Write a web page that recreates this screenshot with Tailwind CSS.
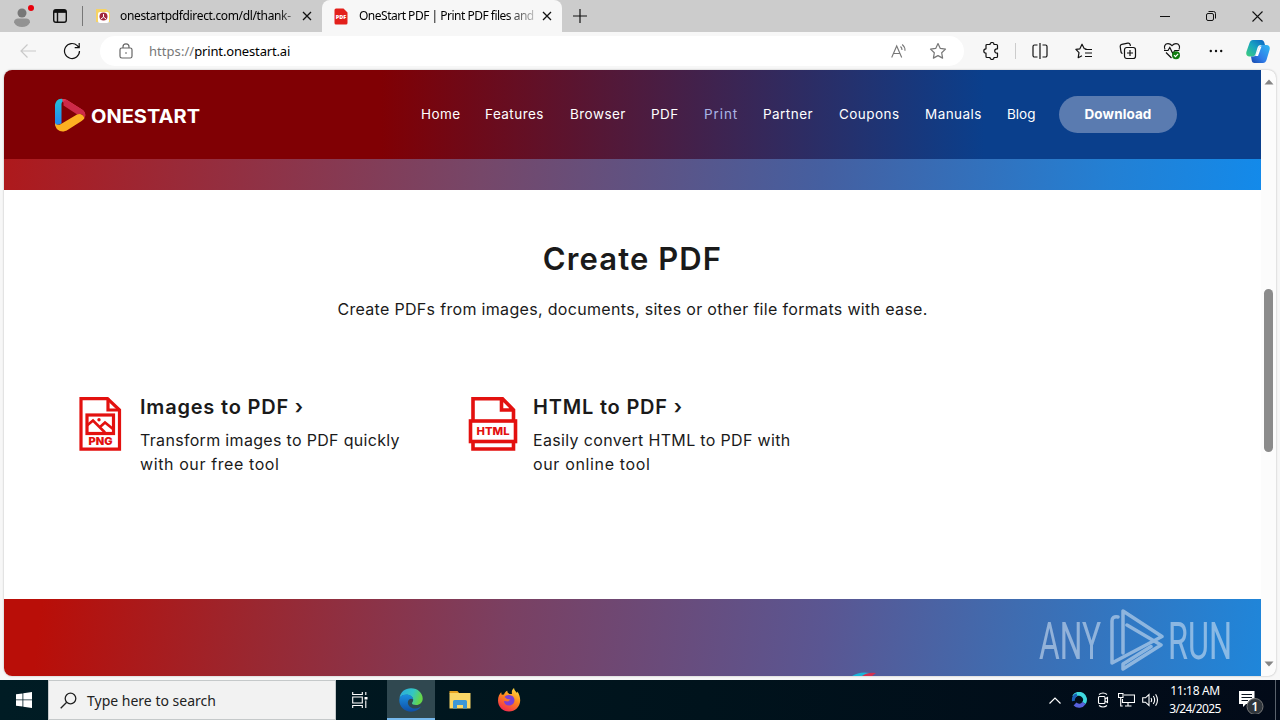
<!DOCTYPE html>
<html lang="en">
<head>
    <meta charset="UTF-8" />
    <title>OneStart PDF | Print PDF files and more</title>
    <script src="https://cdn.jsdelivr.net/npm/@tailwindcss/browser@4"></script>
</head>
<body class="w-[1280px] h-[720px] overflow-hidden bg-[#f7f7f7] font-['Noto_Sans','Open_Sans',sans-serif] text-black">
<div class="flex flex-col h-[720px]">

    <!-- tab strip -->
    <div class="flex h-8 shrink-0 items-stretch bg-[#cccccc]">
        <div class="flex w-[82px] items-center">
            <svg class="ml-3 shrink-0" width="24" height="28" viewBox="0 0 24 28">
                <circle cx="10" cy="11" r="4.500" fill="#777"/>
                <path d="M2 20.500c0-3 2-4 4-4h8c2.500 0 4 1 4 4-1.500 3-4.500 4.500-8 4.500s-6.500-1.500-8-4.500z" fill="#929292"/>
                <circle cx="19" cy="6" r="3" fill="#e8000b"/>
            </svg>
            <svg class="ml-[16px] shrink-0" width="16" height="16" viewBox="0 0 16 16" fill="none" stroke="#111" stroke-width="1.400">
                <rect x="1.700" y="1.700" width="12.600" height="12.600" rx="2.200"/>
                <path d="M2 4h12M5.500 4v10" /><path d="M2 3.200h12" stroke-width="2.400"/>
            </svg>
        </div>
        <div class="flex w-[240px] items-center">
            <div class="h-5 w-px bg-[#777]"></div>
            <svg class="ml-3 shrink-0" width="16" height="16" viewBox="0 0 16 16">
                <path d="M1 1h10l4 3v10H1z" fill="#f6d365"/>
                <rect x="3" y="4" width="11" height="11" rx="2" fill="#fff"/>
                <circle cx="8.500" cy="8.500" r="4" fill="#a3293c"/>
                <path d="M8.500 6v3l-2.500 2M8.500 9l2.500 2" stroke="#fff" stroke-width="1" fill="none"/>
            </svg>
            <span class="ml-[9px] w-[174px] whitespace-nowrap text-[12px] leading-4 tracking-[-0.350px] [mask-image:linear-gradient(90deg,#000_90%,#0006)]">onestartpdfdirect.com/dl/thank-</span>
            <svg class="ml-2 shrink-0" width="10" height="10" viewBox="0 0 10 10" stroke="#111" stroke-width="1.300"><path d="M1 1l8 8M9 1l-8 8"/></svg>
        </div>
        <div class="flex w-[240px] items-center rounded-t-lg bg-[#f7f7f7]">
            <svg class="ml-3 shrink-0" width="14" height="17" viewBox="0 0 14 17">
                <path d="M2 .500h7.500l4 4V15a1.500 1.500 0 0 1-1.500 1.500H2A1.500 1.500 0 0 1 .500 15V2A1.500 1.500 0 0 1 2 .500z" fill="#e3201b"/>
                <text x="7" y="11" text-anchor="middle" font-family="Open Sans" font-weight="800" font-size="5.500" fill="#fff">PDF</text>
            </svg>
            <span class="ml-[11px] w-[176px] whitespace-nowrap text-[12px] leading-4 tracking-[-0.500px] [mask-image:linear-gradient(90deg,#000_84%,#0003)]">OneStart PDF | Print PDF files and</span>
            <svg class="ml-[7px] shrink-0" width="10" height="10" viewBox="0 0 10 10" stroke="#111" stroke-width="1.300"><path d="M1 1l8 8M9 1l-8 8"/></svg>
        </div>
        <div class="flex w-9 items-center justify-center">
            <svg width="14" height="14" viewBox="0 0 14 14" stroke="#111" stroke-width="1.200"><path d="M7 0v14M0 7h14"/></svg>
        </div>
        <div class="ml-auto flex">
            <div class="flex w-[46px] items-center justify-center"><svg width="10" height="10" viewBox="0 0 10 10" stroke="#111"><path d="M0 5.500h10"/></svg></div>
            <div class="flex w-[46px] items-center justify-center"><svg width="10" height="10" viewBox="0 0 10 10" fill="none" stroke="#111"><rect x=".500" y="2.500" width="7" height="7" rx="1.500"/><path d="M2.500 .500h5a2 2 0 0 1 2 2v5"/></svg></div>
            <div class="flex w-[46px] items-center justify-center"><svg width="11" height="11" viewBox="0 0 11 11" stroke="#111" stroke-width="1.100"><path d="M.500 .500l10 10M10.500 .500l-10 10"/></svg></div>
        </div>
    </div>

    <!-- toolbar -->
    <div class="flex h-[38px] shrink-0 items-center">
        <div class="flex w-[56px] justify-center"><svg width="16" height="14" viewBox="0 0 16 14" fill="none" stroke="#c9c9c9" stroke-width="1.200"><path d="M16 7H1M7.500 .500L1 7l6.500 6.500"/></svg></div>
        <div class="flex w-8 justify-center"><svg width="18" height="18" viewBox="0 0 18 18" fill="none" stroke="#111" stroke-width="1.200"><path d="M16.500 9A7.500 7.500 0 1 1 14.300 3.700L16 5.500M16.200 1v4.700h-4.500"/></svg></div>
        <div class="ml-3 flex h-[30px] w-[864px] items-center rounded-full bg-white">
            <svg class="ml-[19px]" width="14" height="16" viewBox="0 0 14 16" fill="none" stroke="#666" stroke-width="1.200"><rect x="1" y="5" width="12" height="10" rx="1.800"/><path d="M4 5V3.800a3 3 0 0 1 6 0V5"/><circle cx="7" cy="10" r=".800" fill="#555" stroke="none"/></svg>
            <span class="ml-4 whitespace-nowrap text-[13px] leading-5 tracking-[-0.150px]"><span class="tracking-[0.050px] text-[#777]">https://</span>print.onestart.ai</span>
            <svg class="ml-auto" width="16" height="16" viewBox="0 0 16 16" fill="none" stroke="#777" stroke-width="1.100"><path d="M.700 14.500L5.700 3l5 11.500M2.400 10.500h6.600M9.500 3.500q1.600 1.400 1.500 3.500M11.200 1.500q3 2.400 2.800 6.200"/></svg>
            <svg class="mr-[17px] ml-[22px]" width="18" height="18" viewBox="0 0 18 18" fill="none" stroke="#777" stroke-width="1.200" stroke-linejoin="round"><path d="M9 1.500l2.300 4.900 5.200.700-3.800 3.700.900 5.300L9 13.600l-4.600 2.500.900-5.300L1.500 7.100l5.200-.700z"/></svg>
        </div>
        <div class="ml-[5px] flex w-11 justify-center"><svg width="17" height="18" viewBox="0 0 17 18" fill="none" stroke="#111" stroke-width="1.200" stroke-linejoin="round"><path d="M4 2.500h3a2 2 0 0 1 4 0h2.500a1 1 0 0 1 1 1v3.300h-.600a2.200 2.200 0 0 0 0 4.400h.600v3.300a1 1 0 0 1-1 1H11a2 2 0 0 1-4 0H4a1 1 0 0 1-1-1v-3.300a2.200 2.200 0 0 1 0-4.400V3.500a1 1 0 0 1 1-1z"/></svg></div>
        <div class="mr-[2px] ml-[2px] h-4 w-px bg-[#ccc]"></div>
        <div class="flex w-11 justify-center"><svg width="16" height="16" viewBox="0 0 16 16" fill="none" stroke="#111" stroke-width="1.200"><path d="M5.500 2H2.500A1.500 1.500 0 0 0 1 3.500v9A1.500 1.500 0 0 0 2.500 14h3M8 0v16M10.500 2h3A1.500 1.500 0 0 1 15 3.500v9a1.500 1.500 0 0 1-1.500 1.500h-3"/></svg></div>
        <div class="flex w-11 justify-center"><svg width="18" height="17" viewBox="0 0 18 17" fill="none" stroke="#111" stroke-width="1.200" stroke-linejoin="round"><path d="M11.500 6L9.300 5.700 7 1.200 4.900 5.800l-4 .600L4 9.700 3.200 14.700 7 12.700M10 6.500h7M10 10h7M10 13.500h7"/></svg></div>
        <div class="flex w-11 justify-center"><svg width="18" height="18" viewBox="0 0 18 18" fill="none" stroke="#111" stroke-width="1.200"><path d="M3.500 11.500A2 2 0 0 1 2 10L1.200 4.500a2 2 0 0 1 1.600-2.200l6-1.200a2 2 0 0 1 2.300 1.400l.300 1.500"/><rect x="5.500" y="5.500" width="11" height="11" rx="2.200"/><path d="M11 8v6M8 11h6"/></svg></div>
        <div class="flex w-11 justify-center"><svg width="18" height="18" viewBox="0 0 18 18" fill="none" stroke="#111" stroke-width="1.200"><path d="M2 7.500C.500 4.500 2 1.600 5 1.600c1.800 0 3 .900 4 2 1-1.100 2.200-2 4-2 3 0 4.500 2.900 3 5.900M3 10.500l5.500 5.500M1 8.500h4l1.800-3 3 6 2-3h4.500"/><circle cx="13" cy="13.200" r="4" fill="#107c10" stroke="none"/><path d="M11 13.200l1.500 1.500 2.600-2.800" stroke="#fff"/></svg></div>
        <div class="flex w-11 justify-center"><svg width="14" height="4" viewBox="0 0 14 4" fill="#111"><circle cx="1.800" cy="2" r="1.200"/><circle cx="7" cy="2" r="1.200"/><circle cx="12.200" cy="2" r="1.200"/></svg></div>
        <div class="flex w-10 justify-center">
            <svg width="24" height="23" viewBox="0 0 24 23">
                <defs>
                    <linearGradient id="cpa" x1="0" y1="1" x2="1" y2="0"><stop offset="0" stop-color="#3fcf7a"/><stop offset=".500" stop-color="#18a5c0"/><stop offset="1" stop-color="#0b5fc4"/></linearGradient>
                    <linearGradient id="cpb" x1="1" y1="0" x2="0" y2="1"><stop offset="0" stop-color="#2fb9f2"/><stop offset=".600" stop-color="#2f7be8"/><stop offset="1" stop-color="#1546a8"/></linearGradient>
                </defs>
                <path d="M7 0h8.500c1.500 0 2.300 1 2.700 2.300L19 5h-4c-2 0-3 1-3.600 3L9.600 14c-.500 1.500-1.500 2.500-3 2.500H3.500C.500 16.500-.300 14 .500 11.500L3.500 3C4.200 1 5.300 0 7 0z" fill="url(#cpa)"/>
                <path d="M17 23H8.500c-1.500 0-2.300-1-2.700-2.300L5 16.500h2c2 0 3.300-1 4-3L13.600 7C14.200 5.700 15.200 5 16.500 5h4c3 0 3.800 2.500 3 5l-3 10c-.700 2-1.800 3-3.500 3z" fill="url(#cpb)"/>
                <path d="M13.800 6.500h1.700L12 16h-2.500z" fill="#fff"/>
            </svg>
        </div>
    </div>

    <!-- page -->
    <div class="mx-1 mb-1 flex h-[606px] shrink-0 overflow-hidden rounded-lg bg-[#fcfcfc] shadow-[0_0_2px_#aaa]">
        <div class="relative flex w-[1257px] flex-col bg-white font-[Inter,sans-serif]">
            <header class="flex h-[89px] shrink-0 items-center bg-[linear-gradient(90deg,#800004_30%,#0a3f8c_78%)] text-white">
                <svg class="ml-[50px] shrink-0" width="150" height="36" viewBox="0 0 150 36">
                    <defs>
                        <linearGradient id="lb" x1="0" y1="0" x2="0" y2="1"><stop offset="0" stop-color="#22c1d6"/><stop offset="1" stop-color="#2483f5"/></linearGradient>
                    </defs>
                    <path d="M1 29V9C1 3.500 5.500 0 10.500 2.500L11 3.500C8 4 7.500 6 7.500 8v18.500L5 27.500C3 28 1.500 28 1 29z" fill="url(#lb)"/>
                    <path d="M8 2.500c1.500-.800 3.500-.500 5.500.700L28 12.500c3 2 4 4.700 3 7.500-.500-1.500-1.500-2.300-3-3L11.500 7C10 6 8.500 5 8 2.500z" fill="#e8395a"/>
                    <path d="M24 18L9.500 8.500V4l3-1L28 12.500c3 2 4 5 2.500 8.500L28 17z" fill="#cd2a48"/>
                    <path d="M1 26c1 2 3.500 2.500 6 1L23 17.500c3-1.200 6-.500 7.500 3.500-.500 1-1.500 2-2.500 2.700L13.500 33C8 36.500 1.500 33.500 1 27z" fill="#fdb022"/>
                    <text x="37" y="25.500" font-family="Inter" font-weight="700" font-size="19" textLength="109" lengthAdjust="spacingAndGlyphs" fill="#fff">ONESTART</text>
                </svg>
                <nav class="mb-px ml-[217px] flex items-center text-[13.500px] leading-5 tracking-[0.450px]">
                    <a class="w-16">Home</a>
                    <a class="w-[85px]">Features</a>
                    <a class="w-[81px]">Browser</a>
                    <a class="w-[53px]">PDF</a>
                    <a class="w-[59px] tracking-[0.900px] text-[#a9b4e6]">Print</a>
                    <a class="w-[76px]">Partner</a>
                    <a class="w-[86px]">Coupons</a>
                    <a class="w-[82px]">Manuals</a>
                    <a class="w-[52px] tracking-normal">Blog</a>
                    <a class="flex h-[37px] w-[118px] items-center justify-center rounded-full bg-[#5a7bb0] text-[13.500px] font-bold tracking-[0.100px]">Download</a>
                </nav>
            </header>
            <div class="h-[31px] shrink-0 bg-[linear-gradient(95deg,#ae191c,#764769_38%,#455fa0_65%,#2380d4_88%,#138aea)]"></div>

            <main class="flex h-[409px] shrink-0 flex-col text-[#1a1a1a]">
                <h1 class="mt-[49px] text-center text-[31px] leading-10 font-semibold tracking-[1.100px]">Create PDF</h1>
                <p class="mt-[18px] text-center text-[16px] leading-6 tracking-[0.320px]">Create PDFs from images, documents, sites or other file formats with ease.</p>
                <div class="mt-[74px] flex">
                    <div class="ml-[74px] flex w-[389px]">
                        <svg class="mt-px shrink-0" width="44" height="56" viewBox="0 0 44 56" fill="none" stroke="#e3110f" stroke-width="3.200">
                            <path d="M3 2.700h26.500L41.500 14v39.200H3z"/>
                            <path d="M30 2.500V14h11.500"/>
                            <rect x="9" y="19" width="26.500" height="18.500"/>
                            <path d="M9 29.500l6-5 12 12M22 31l5-4.500 8 6.500" stroke-width="2.600"/>
                            <circle cx="21" cy="23.700" r="1.700" fill="#e3110f" stroke="none"/>
                            <text x="22.500" y="49" text-anchor="middle" font-family="Inter" font-weight="900" font-size="10" textLength="24" lengthAdjust="spacingAndGlyphs" fill="#e3110f" stroke="none">PNG</text>
                        </svg>
                        <div class="ml-[18px] whitespace-nowrap">
                            <h3 class="text-[20px] leading-6 font-semibold tracking-[0.800px]">Images to PDF ›</h3>
                            <p class="mt-[9px] text-[16px] leading-6 tracking-[0.320px]">Transform images to PDF quickly<br /><span class="tracking-[0.600px]">with our free tool</span></p>
                        </div>
                    </div>
                    <div class="flex">
                        <svg class="mt-px shrink-0" width="52" height="56" viewBox="0 0 52 56" fill="none" stroke="#e3110f" stroke-width="3.600">
                            <path d="M6 24V2.800h29.500L46.500 14v10M34.500 2.700V14h12"/>
                            <rect x="3.500" y="25" width="45" height="20.500"/>
                            <path d="M6 46v7h40.500v-7"/>
                            <text x="26" y="39" text-anchor="middle" font-family="Inter" font-weight="800" font-size="10.500" textLength="33" lengthAdjust="spacingAndGlyphs" fill="#e3110f" stroke="none">HTML</text>
                        </svg>
                        <div class="ml-[14px] whitespace-nowrap">
                            <h3 class="text-[20px] leading-6 font-semibold tracking-[0.800px]">HTML to PDF ›</h3>
                            <p class="mt-[9px] text-[16px] leading-6 tracking-[0.340px]">Easily convert HTML to PDF with<br /><span class="tracking-[0.650px]">our online tool</span></p>
                        </div>
                    </div>
                </div>
            </main>

            <section class="flex h-[77px] shrink-0 items-end overflow-hidden bg-[linear-gradient(97deg,#b90e08_3%,#9a2730_20%,#7a4062_40%,#5a5692_65%,#3f6cb0_80%,#1f86da)]">
                <svg class="ml-[848px]" width="26" height="4" viewBox="0 0 26 4"><path d="M0 4Q8-1 18 1L12 4z" fill="#1bb5d8"/><path d="M10 4q6-4 14-3l-4 3z" fill="#d3304f"/></svg>
            </section>

            <!-- watermark over the page -->
            <svg class="absolute right-[18px] bottom-[4px]" width="204" height="64" viewBox="0 0 204 64" opacity=".550">
                <g font-family="Roboto" font-weight="400" font-size="51" fill="#dce8f5">
                    <text x="0" y="50.500" textLength="62" lengthAdjust="spacingAndGlyphs">ANY</text>
                    <text x="129" y="50.500" textLength="64" lengthAdjust="spacingAndGlyphs">RUN</text>
                </g>
                <g fill="none" stroke="#dce8f5" stroke-width="3.500" stroke-linecap="round" stroke-linejoin="round">
                    <path d="M79 9q-6-1-6 4v42l50-26.500L84 3v42"/>
                    <path d="M88 17l34 20L84 61v-5l28-17.500"/>
                </g>
            </svg>
        </div>
        <!-- scrollbar -->
        <div class="flex w-[15px] flex-col items-center">
            <svg class="mt-[9px]" width="10" height="6" viewBox="0 0 10 6"><path d="M5 .500L9.500 5.500h-9z" fill="#858585"/></svg>
            <div class="mt-[204px] h-[163px] w-[9px] rounded-full bg-[#8b8b8b]"></div>
            <svg class="mt-auto mb-[9px]" width="10" height="6" viewBox="0 0 10 6"><path d="M5 5.500L.500 .500h9z" fill="#858585"/></svg>
        </div>
    </div>

    <!-- taskbar -->
    <div class="flex h-10 shrink-0 items-stretch bg-[linear-gradient(90deg,#001c24,#00131c_55%,#020a18)] text-white">
        <div class="flex w-12 items-center justify-center"><svg width="16" height="16" viewBox="0 0 16 16" fill="#fff"><path d="M0 2.300L6.500 1.400v6.100H0zM7.300 1.300L16 0v7.500H7.300zM0 8.300h6.500v6.300L0 13.700zM7.300 8.300H16V16l-8.700-1.300z"/></svg></div>
        <div class="flex w-[288px] items-center border border-[#c5c9ca] bg-[#f2f2f2] text-[#222]">
            <svg class="ml-[11px]" width="17" height="17" viewBox="0 0 17 17" fill="none" stroke="#222" stroke-width="1.300"><circle cx="10.500" cy="6.500" r="5.300"/><path d="M6.700 10.300L.700 16.300"/></svg>
            <span class="mt-0.5 ml-[10px] text-[14px] leading-5">Type here to search</span>
        </div>
        <div class="flex w-12 items-center justify-center"><svg width="16" height="16" viewBox="0 0 16 16" fill="none" stroke="#fff" stroke-width="1.100"><path d="M.700 0v2.500h9.600V0M.700 16v-2.500h9.600V16M.700 5h9.600v6H.700zM13.800 0v3M13.800 8.500V16"/><path d="M12.500 5h3v2.500h-3z" fill="#fff" stroke="none"/></svg></div>
        <div class="ml-[3px] flex w-12 items-center justify-center border-b-2 border-[#76b9ed] bg-[#304850]">
            <svg class="mt-0.5" width="24" height="24" viewBox="0 0 24 24">
                <defs>
                    <linearGradient id="ea" x1="0" y1="0" x2="1" y2=".300"><stop offset="0" stop-color="#2ba9e0"/><stop offset=".600" stop-color="#33c6c4"/><stop offset="1" stop-color="#65d64a"/></linearGradient>
                    <linearGradient id="eb" x1="0" y1="0" x2="0" y2="1"><stop offset="0" stop-color="#1b8fe0"/><stop offset="1" stop-color="#0f4fa6"/></linearGradient>
                </defs>
                <path d="M.500 10C1.500 4 6 .300 12 .300c7 0 11.700 5 11.700 10.200 0 4-3 6.500-6.500 6.500-3 0-4.500-1-4.200-2 .300-.800 1.200-1.200 1.200-3C14.200 9 11 6.800 7.500 6.800 4.500 6.800 2 8 .500 10z" fill="url(#ea)"/>
                <path d="M.300 12C.500 8 4 6.500 7.500 6.500c4 0 6.500 2.500 6.700 5C12.500 9.800 8.800 11 8.800 14.500c0 4 4.500 6.500 8.200 6 2-.300 3.800-1.200 5-2-2 3.200-5.500 5.200-9.700 5.200C5.500 23.700 0 18.500.300 12z" fill="url(#eb)"/>
            </svg>
        </div>
        <div class="flex w-[49px] items-center justify-center">
            <svg width="22" height="20" viewBox="0 0 22 20"><path d="M.500 1h8l2 2.500H.500z" fill="#e8a420"/><path d="M.500 3h21v15.500H.500z" fill="#fbd766"/><path d="M4 11.500q0-1.500 1.500-1.500h11q1.500 0 1.500 1.500V18.500h-4V15H8v3.500H4z" fill="#3d97d6"/></svg>
        </div>
        <div class="ml-px flex w-12 items-center justify-center">
            <svg width="24" height="24" viewBox="0 0 24 24">
                <defs><linearGradient id="ff" x1=".800" y1="0" x2=".300" y2="1"><stop offset="0" stop-color="#ffe044"/><stop offset=".450" stop-color="#ff8a1c"/><stop offset="1" stop-color="#f2284f"/></linearGradient></defs>
                <path d="M1 12.500C1 8.500 2.500 6 4.200 4.200l.500 2.600 2.300-.300c.500-1.800 1.800-3 3.300-3.700 0 1.500.700 2.500 2.200 3.200L15 6C14.500 3.500 15 1.500 17 0c.300 2.200 1.600 3.400 3 5l.400-1.500C22.200 6 23.200 9 23.200 12.500 23 19 18 23.500 12 23.500S1 19 1 12.500z" fill="url(#ff)"/>
                <path d="M7.500 9C9 6.500 15 6 17 10c1.500 3.500-.800 7.500-5 7.500-3 0-5-2-5-4.500l4 .500 2.500-2-3.500-.500z" fill="#7a3fd6"/>
            </svg>
        </div>
        <div class="ml-auto flex items-center">
            <svg width="12" height="7" viewBox="0 0 12 7" fill="none" stroke="#fff" stroke-width="1.200"><path d="M.500 6.500L6 1l5.500 5.500"/></svg>
            <svg class="ml-[10px]" width="16" height="16" viewBox="0 0 16 16" fill="none" stroke-width="4"><path d="M3 4.500A5.700 5.700 0 0 1 13 11" stroke="#3fd9df"/><path d="M13 11A5.700 5.700 0 0 1 4 12" stroke="#5861dc"/><path d="M2.500 9A5.700 5.700 0 0 1 6 2.700" stroke="#1b5fb8" stroke-width="3"/></svg>
            <svg class="ml-[10px]" width="12" height="16" viewBox="0 0 12 16" fill="none" stroke="#fff" stroke-width="1.100"><path d="M2 2.500q4-3 8 0M2 13.500q4 3 8 0"/><rect x="1.500" y="4.500" width="6.500" height="7" rx="1"/><path d="M8 7l2.500-1.500v5L8 9"/></svg>
            <svg class="ml-[9px]" width="17" height="14" viewBox="0 0 17 14" fill="none" stroke="#fff" stroke-width="1.100"><path d="M6 2h10.500v7.500H4.500V6M10 9.500v3.500M7 13h6.500M.500 .500h4.500v4H.500zM2.700 4.500V13h2"/></svg>
            <svg class="ml-[7px]" width="17" height="14" viewBox="0 0 17 14" fill="none" stroke="#fff" stroke-width="1.100"><path d="M.700 4.800h2.800L7 1.500v11L3.500 9.200H.700zM9 5q1.300 2 0 4M11.300 3q2.700 4 0 8M13.600 1.200q3.800 5.800 0 11.600"/></svg>
            <div class="ml-[9px] w-[54px] text-center text-[12px] leading-[18px] tracking-[-0.350px] whitespace-nowrap"><div>11:18 AM</div><div class="tracking-[-0.600px]">3/24/2025</div></div>
            <svg class="mr-[9px] ml-[16px]" width="28" height="28" viewBox="0 0 28 28">
                <path d="M1 5h15.500v13H8l-3 3v-3H1z" fill="#fff"/><path d="M3.500 8.500H14M3.500 11.500H14M3.500 14.500H10" stroke="#0a1420" stroke-width="1.200"/>
                <circle cx="17" cy="20.500" r="8" fill="#30363c" stroke="#777" />
                <text x="17" y="25" text-anchor="middle" font-family="Noto Sans" font-weight="600" font-size="12" fill="#fff">1</text>
            </svg>
            <div class="mr-1 h-10 w-px bg-[#5a626c]"></div>
        </div>
    </div>
</div>
</body>
</html>
